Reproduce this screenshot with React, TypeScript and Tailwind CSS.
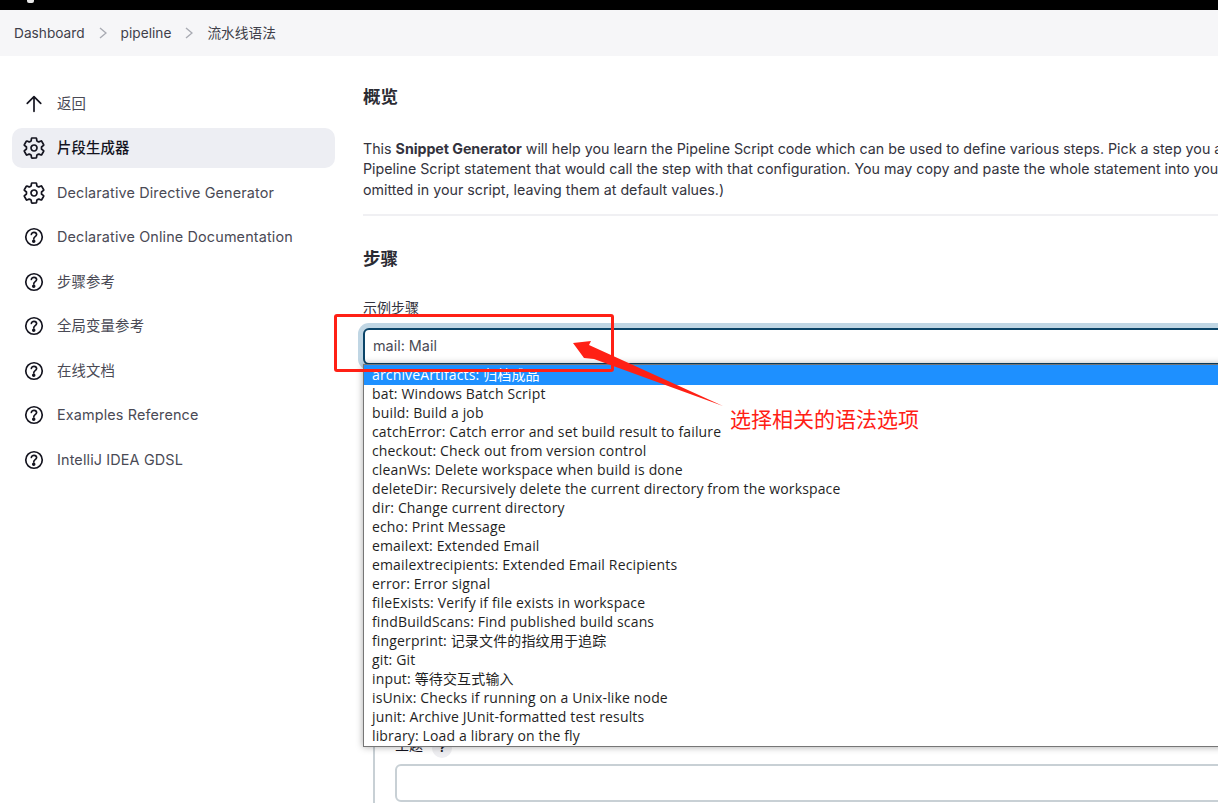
import React from "react";
import { IoSettingsOutline, IoHelpCircleOutline, IoArrowUpOutline } from "react-icons/io5";

const font = { fontFamily: '"Inter","Noto Sans CJK SC",sans-serif' };
const iconCls = "shrink-0 text-[#14141f] [&_*]:stroke-[36px]";

function Chevron() {
  return (
    <svg width="8" height="12" viewBox="0 0 8 12" fill="none" stroke="#a9abb3" strokeWidth="1.4">
      <path d="M1 1l6 5-6 5" />
    </svg>
  );
}

const side: [string, string, boolean?][] = [
  ["up", "返回"],
  ["gear", "片段生成器", true],
  ["gear", "Declarative Directive Generator"],
  ["help", "Declarative Online Documentation"],
  ["help", "步骤参考"],
  ["help", "全局变量参考"],
  ["help", "在线文档"],
  ["help", "Examples Reference"],
  ["help", "IntelliJ IDEA GDSL"],
];

const options = [
  "bat: Windows Batch Script",
  "build: Build a job",
  "catchError: Catch error and set build result to failure",
  "checkout: Check out from version control",
  "cleanWs: Delete workspace when build is done",
  "deleteDir: Recursively delete the current directory from the workspace",
  "dir: Change current directory",
  "echo: Print Message",
  "emailext: Extended Email",
  "emailextrecipients: Extended Email Recipients",
  "error: Error signal",
  "fileExists: Verify if file exists in workspace",
  "findBuildScans: Find published build scans",
  "fingerprint: 记录文件的指纹用于追踪",
  "git: Git",
  "input: 等待交互式输入",
  "isUnix: Checks if running on a Unix-like node",
  "junit: Archive JUnit-formatted test results",
  "library: Load a library on the fly",
];

export default function App() {
  return (
    <div className="relative h-[803px] w-[1218px] overflow-hidden bg-white text-[#14141f]" style={font}>
      <div className="h-[10px] bg-black pl-[27px]">
        <div className="h-[3px] w-[7px] rounded-b-[2px] bg-[#e8e8e8]" />
      </div>
      <div className="flex h-[46px] items-center gap-[14px] bg-[#f6f6f8] pl-[14px] text-[13.7px] text-[#3f3f4a]">
        <span>Dashboard</span>
        <Chevron />
        <span>pipeline</span>
        <Chevron />
        <span>流水线语法</span>
      </div>
      <div className="flex">
        <aside className="flex w-[363px] shrink-0 flex-col gap-[4.5px] pl-[12px] pr-[28px] pt-[27px]">
          {side.map(([icon, label, active]) => (
            <div
              key={label}
              className={
                "flex h-[40px] items-center gap-[11px] rounded-[10px] pl-[10px] pt-[1px] text-[14.4px] tracking-[0.14px] " +
                (active ? "bg-[#edeef3] font-medium text-[#14141f]" : "text-[#4a4a55]")
              }
            >
              {icon === "up" ? (
                <IoArrowUpOutline size={24} className={iconCls} />
              ) : icon === "gear" ? (
                <IoSettingsOutline size={24} className={iconCls} />
              ) : (
                <IoHelpCircleOutline size={24} className={iconCls} />
              )}
              <span>{label}</span>
            </div>
          ))}
        </aside>
        <main className="w-[1000px] shrink-0 pt-[29px]">
          <h2 className="text-[17.5px] font-bold leading-[24px] text-[#2b2b33]">概览</h2>
          <div className="mt-[30px] whitespace-nowrap text-[14.25px] leading-[20.4px] text-[#33333d]">
            <p>
              This <b className="tracking-[-0.06px]">Snippet Generator</b> will help you learn the Pipeline Script code which can be used to define various steps. Pick a step you are interested in from the list, configure it, click Generate
            </p>
            <p>Pipeline Script statement that would call the step with that configuration. You may copy and paste the whole statement into your script, or pick up just the options you care about.</p>
            <p>omitted in your script, leaving them at default values.)</p>
          </div>
          <div className="mt-[14px] h-[2px] bg-[#f0f0f3]" />
          <h2 className="mt-[31px] text-[17.5px] font-bold leading-[24px] text-[#2b2b33]">步骤</h2>
          <div className="mt-[27px] text-[14px] leading-[20px] text-[#33333d]">示例步骤</div>
          <div className="mt-[10px] flex h-[37px] items-center rounded-[6px] border-2 border-[#0b4468] bg-white pb-[1px] pl-[8px] text-[14.4px] text-[#4a4a55] shadow-[0_0_0_5px_#c0d6e4]">
            mail: Mail
          </div>
          <div className="ml-[10px] mt-[368px] h-[80px] border-l-2 border-[#c8d0d5] pl-[20px]">
            <div className="flex h-[27px] items-center gap-[9px] pt-[2px] text-[14px]">
              <span className="mb-[6px]">主题</span>
              <span className="flex h-[20px] w-[20px] items-center justify-center rounded-full bg-[#eeeef1] text-[12px] font-bold">?</span>
            </div>
            <div className="mt-[4px] h-[38px] rounded-[6px] border-2 border-[#c8d0d5]" />
          </div>
        </main>
      </div>

      {/* Open dropdown list */}
      <div
        className="absolute left-[363px] top-[364px] h-[383px] w-[900px] border border-[#767676] bg-white text-[14px] leading-[18px] tracking-[0.15px] text-[#1f1f1f] shadow-[0_0_7px_rgba(0,0,0,0.35)]"
        style={{ fontFamily: '"Open Sans","Noto Sans CJK SC",sans-serif' }}
      >
        <div className="h-[20px] bg-[#1e90ff] pl-[8px] leading-[20px] text-white">archiveArtifacts: 归档成品</div>
        {options.map((o) => (
          <div key={o} className="h-[19px] whitespace-nowrap pl-[8px]">
            {o}
          </div>
        ))}
      </div>

      {/* Red annotation */}
      <div className="absolute left-[334px] top-[314px] h-[58px] w-[280px] rounded-[3px] border-[3px] border-[#ff2015]" />
      <svg className="absolute left-[570px] top-[335px]" width="160" height="75" viewBox="0 0 160 75">
        <path d="M3 8 L21 6 L19 10 L153 71 L24 24 L14 23 Z" fill="#ff2015" />
      </svg>
      <div className="absolute left-[730px] top-[403px] text-[21px] leading-[30px] text-[#ff2015]" style={{ fontFamily: '"Noto Sans CJK SC",sans-serif' }}>
        选择相关的语法选项
      </div>
    </div>
  );
}
